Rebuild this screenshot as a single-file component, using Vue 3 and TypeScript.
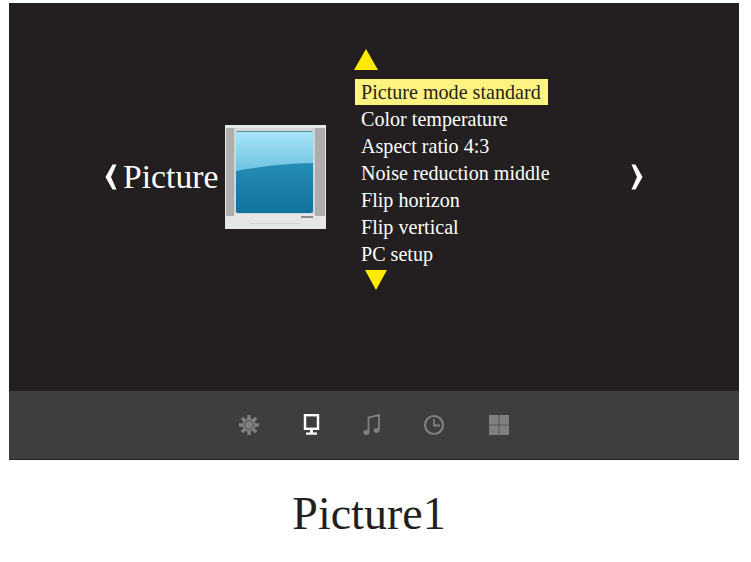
<script setup lang="ts">
const items = [
  'Picture mode standard',
  'Color temperature',
  'Aspect ratio 4:3',
  'Noise reduction middle',
  'Flip horizon',
  'Flip vertical',
  'PC setup',
]
</script>

<template>
  <div class="page">
    <div class="screen">
      <div class="main">
        <svg class="chevron" width="12" height="26" viewBox="0 0 12 26">
          <path d="M11.5 0.5 L6 13 L11.5 25.5 L7.5 25.5 L0.5 13 L7.5 0.5 Z" fill="#fff" />
        </svg>
        <span class="title">Picture</span>
        <svg class="tv" width="101" height="104" viewBox="0 0 101 104">
          <defs>
            <linearGradient id="glassTop" x1="0" y1="0" x2="0" y2="1">
              <stop offset="0" stop-color="#aae6fb" />
              <stop offset="1" stop-color="#6dc2e0" />
            </linearGradient>
            <linearGradient id="glassBottom" x1="0" y1="0" x2="0" y2="1">
              <stop offset="0" stop-color="#2f9dc4" />
              <stop offset="1" stop-color="#12729f" />
            </linearGradient>
          </defs>
          <rect width="101" height="104" fill="#e6e6e6" />
          <rect x="1" y="3" width="99" height="86" fill="#d4d6d6" />
          <rect x="1" y="3" width="8" height="88" fill="#adadad" />
          <rect x="90" y="3" width="10" height="88" fill="#adadad" />
          <rect x="11" y="6" width="77" height="82" rx="2" fill="url(#glassBottom)" />
          <path d="M11 8 Q11 6 13 6 L86 6 Q88 6 88 8 L88 38 Q48 39 11 46 Z" fill="url(#glassTop)" />
          <path d="M12 6.5 H87" stroke="#5f8f96" stroke-width="1" />
          <rect x="76" y="91" width="12" height="2" fill="#8c8c8c" />
          <rect x="25" y="98" width="50" height="1" fill="#d2d2d2" />
        </svg>
        <div class="menu">
          <svg class="arrow" width="24" height="21" viewBox="0 0 24 21">
            <path d="M12 0 L24 21 L0 21 Z" fill="#ffea00" />
          </svg>
          <ul class="list">
            <li v-for="(item, i) in items" :key="item" :class="{ active: i === 0 }">{{ item }}</li>
          </ul>
          <svg class="arrow down" width="22" height="20" viewBox="0 0 22 20">
            <path d="M0 0 L22 0 L11 20 Z" fill="#ffea00" />
          </svg>
        </div>
        <svg class="chevron right" width="12" height="26" viewBox="0 0 12 26">
          <path d="M0.5 0.5 L6 13 L0.5 25.5 L4.5 25.5 L11.5 13 L4.5 0.5 Z" fill="#fff" />
        </svg>
      </div>
      <div class="bar">
        <svg width="22" height="22" viewBox="0 0 22 22">
          <g stroke="#808080" stroke-width="3.4">
            <path d="M11 1 V21 M1 11 H21 M3.9 3.9 L18.1 18.1 M18.1 3.9 L3.9 18.1" />
          </g>
          <circle cx="11" cy="11" r="6.6" fill="#808080" />
          <circle cx="11" cy="11" r="4.4" fill="none" stroke="#5a5a5a" stroke-width="1.2" />
        </svg>
        <svg width="18" height="22" viewBox="0 0 18 22">
          <rect x="2" y="1.2" width="13" height="13.6" fill="none" stroke="#fff" stroke-width="2.4" />
          <rect x="7" y="16" width="3" height="3" fill="#fff" />
          <rect x="3" y="18.5" width="11" height="2.2" fill="#fff" />
        </svg>
        <svg width="18" height="22" viewBox="0 0 18 22">
          <path d="M5.5 18 V3.5 L16 1 V16" fill="none" stroke="#808080" stroke-width="1.8" />
          <ellipse cx="3.4" cy="18.5" rx="2.9" ry="2.4" fill="#808080" />
          <ellipse cx="13.6" cy="16.5" rx="2.9" ry="2.4" fill="#808080" />
        </svg>
        <svg class="clock" width="22" height="22" viewBox="0 0 22 22">
          <circle cx="11" cy="11" r="9" fill="none" stroke="#808080" stroke-width="2.2" />
          <path d="M11 5 V11.5 H17" fill="none" stroke="#808080" stroke-width="1.8" />
        </svg>
        <svg width="22" height="22" viewBox="0 0 22 22">
          <rect x="1" y="1" width="9.7" height="9.7" fill="#808080" />
          <rect x="11.3" y="1" width="9.7" height="9.7" fill="#808080" />
          <rect x="1" y="11.3" width="9.7" height="9.7" fill="#808080" />
          <rect x="11.3" y="11.3" width="9.7" height="9.7" fill="#808080" />
        </svg>
      </div>
    </div>
    <p class="caption">Picture1</p>
  </div>
</template>

<style scoped>
.page {
  width: 751px;
  height: 562px;
  padding: 3px 12px 0 9px;
  box-sizing: border-box;
  background: #fff;
  font-family: "Liberation Serif", "Times New Roman", serif;
  overflow: hidden;
}

.screen {
  width: 730px;
  height: 457px;
  display: flex;
  flex-direction: column;
  background: #231f20;
}

.main {
  height: 388px;
  flex: none;
  display: flex;
  align-items: flex-start;
  padding-left: 96px;
  box-sizing: border-box;
}

.chevron {
  margin-top: 161px;
  flex: none;
}

.title {
  margin: 154px 0 0 6px;
  width: 95px;
  font-size: 33.7px;
  line-height: 40px;
  color: #fff;
  white-space: nowrap;
}

.tv {
  margin: 122px 0 0 7px;
  flex: none;
}

.menu {
  margin: 46px 0 0 29px;
  width: 276px;
  flex: none;
  display: flex;
  flex-direction: column;
}

.arrow {
  margin-left: -1px;
  display: block;
}

.arrow.down {
  margin: 3px 0 0 10px;
}

.list {
  list-style: none;
  margin: 9px 0 0;
  padding: 0;
  display: flex;
  flex-direction: column;
  gap: 1px;
}

.list li {
  width: 193px;
  height: 26px;
  padding-left: 6px;
  box-sizing: border-box;
  font-size: 20.1px;
  line-height: 27px;
  color: #fff;
  white-space: nowrap;
}

.list li.active {
  background: #fff380;
  color: #231f20;
}

.bar {
  height: 69px;
  flex: none;
  display: flex;
  align-items: center;
  justify-content: center;
  gap: 42.5px;
  box-sizing: border-box;
  background: #3e3e3e;
  border-bottom: 1px solid #222;
}

.clock {
  transform: translateX(-1px);
}

.caption {
  margin: 27px 0 0;
  width: 720px;
  text-align: center;
  font-size: 46px;
  line-height: 54px;
  color: #231f20;
}
</style>
